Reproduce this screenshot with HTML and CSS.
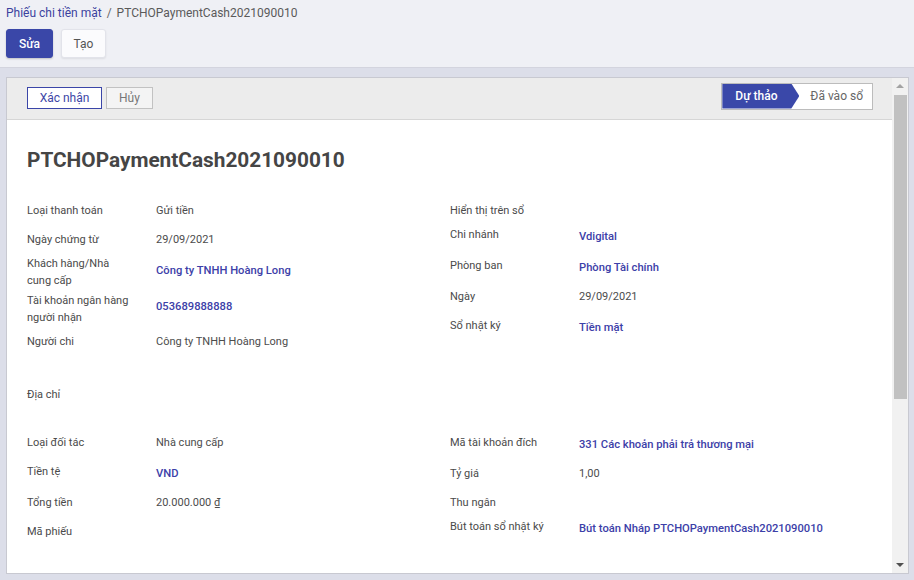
FILE: index.html
```html
<!DOCTYPE html>
<html lang="vi">
<head>
<meta charset="utf-8">
<title>Phiếu chi tiền mặt</title>
<link rel="stylesheet" href="styles.css">
</head>
<body>
<div class="app">
  <div class="cp">
    <div class="crumbs"><a class="crumb-link">Phiếu chi tiền mặt</a><span class="crumb-sep">/</span><span class="crumb-cur">PTCHOPaymentCash2021090010</span></div>
    <div class="cp-buttons">
      <button class="btn btn-primary">Sửa</button>
      <button class="btn btn-secondary">Tạo</button>
    </div>
  </div>
  <div class="content">
    <div class="card">
      <div class="card-main">
        <div class="header">
          <div class="header-buttons">
            <button class="hbtn hbtn-confirm">Xác nhận</button>
            <button class="hbtn hbtn-cancel">Hủy</button>
          </div>
          <div class="status">
            <span class="st st-active">Dự thảo</span>
            <span class="st st-next">Đã vào sổ</span>
          </div>
        </div>
        <div class="sheet">
          <h1 class="title">PTCHOPaymentCash2021090010</h1>
          <div class="groups">
            <div class="group">
              <div class="f h29"><span class="lbl">Loại thanh toán</span><span class="val">Gửi tiền</span></div>
              <div class="f h24"><span class="lbl">Ngày chứng từ</span><span class="val">29/09/2021</span></div>
              <div class="f h37"><span class="lbl">Khách hàng/Nhà cung cấp</span><span class="val lnk off7">Công ty TNHH Hoàng Long</span></div>
              <div class="f h41"><span class="lbl">Tài khoản ngân hàng người nhận</span><span class="val lnk off6">053689888888</span></div>
              <div class="f h29"><span class="lbl">Người chi</span><span class="val">Công ty TNHH Hoàng Long</span></div>
            </div>
            <div class="group">
              <div class="f h24"><span class="lbl">Hiển thị trên sổ</span><span class="val"></span></div>
              <div class="f h31"><span class="lbl">Chi nhánh</span><span class="val lnk">Vdigital</span></div>
              <div class="f h31"><span class="lbl">Phòng ban</span><span class="val lnk">Phòng Tài chính</span></div>
              <div class="f h29"><span class="lbl">Ngày</span><span class="val">29/09/2021</span></div>
              <div class="f h31"><span class="lbl">Sổ nhật ký</span><span class="val lnk">Tiền mặt</span></div>
            </div>
          </div>
          <div class="f address"><span class="lbl">Địa chỉ</span><span class="val"></span></div>
          <div class="groups">
            <div class="group">
              <div class="f h29"><span class="lbl">Loại đối tác</span><span class="val">Nhà cung cấp</span></div>
              <div class="f h31"><span class="lbl">Tiền tệ</span><span class="val lnk">VND</span></div>
              <div class="f h29"><span class="lbl">Tổng tiền</span><span class="val">20.000.000 ₫</span></div>
              <div class="f h29"><span class="lbl">Mã phiếu</span><span class="val"></span></div>
            </div>
            <div class="group">
              <div class="f h31"><span class="lbl">Mã tài khoản đích</span><span class="val lnk">331 Các khoản phải trả thương mại</span></div>
              <div class="f h29"><span class="lbl">Tỷ giá</span><span class="val">1,00</span></div>
              <div class="f h24"><span class="lbl">Thu ngân</span><span class="val"></span></div>
              <div class="f h31"><span class="lbl">Bút toán sổ nhật ký</span><span class="val lnk">Bút toán Nháp PTCHOPaymentCash2021090010</span></div>
            </div>
          </div>
        </div>
      </div>
      <div class="vscroll">
        <div class="sb-btn"><span class="tri tri-up"></span></div>
        <div class="sb-track"><div class="sb-thumb"></div></div>
        <div class="sb-btn"><span class="tri tri-down"></span></div>
      </div>
    </div>
  </div>
</div>
</body>
</html>
```
FILE: styles.css
```css
* { box-sizing: border-box; }
html, body { margin: 0; padding: 0; height: 100%; }
body {
  font-family: Roboto, "Noto Sans", Arial, sans-serif;
  color: #4c4c4c;
  background: #dcdee9;
  overflow: hidden;
}
.app { display: flex; flex-direction: column; height: 100vh; }

.cp {
  background: #eff0f5;
  border-bottom: 1px solid #d3d4de;
  padding: 5px 6px 9px;
  height: 68px;
}
.crumbs { font-size: 12px; line-height: 17px; color: #555; white-space: nowrap; }
.crumb-link { color: #3b429e; }
.crumb-sep { margin: 0 5px; color: #666; }
.crumb-cur { color: #5a5a5a; }
.cp-buttons { display: flex; gap: 8px; margin-top: 7px; }
.btn {
  font-family: inherit;
  font-size: 12px;
  height: 29px;
  border-radius: 3px;
  padding: 0;
  cursor: pointer;
}
.btn-primary {
  background: #3a47a8;
  border: 1px solid #3a47a8;
  color: #fff;
  font-weight: 500;
  width: 47px;
  box-shadow: 0 1px 2px rgba(0,0,0,.2);
}
.btn-secondary {
  background: #fbfbfd;
  border: 1px solid #e2e3ea;
  color: #555;
  width: 45px;
  box-shadow: 0 1px 2px rgba(0,0,0,.08);
}

.content { flex: 1; padding: 9px 5px 6px 6px; min-height: 0; }
.card {
  height: 100%;
  display: flex;
  background: #fff;
  border: 1px solid #c8c9d1;
  overflow: hidden;
}
.card-main { flex: 1; min-width: 0; overflow: hidden; }

.header {
  height: 42px;
  background: #ececec;
  border-bottom: 1px solid #d6d6d6;
  display: flex;
  align-items: center;
  justify-content: space-between;
  padding: 0 19px 0 20px;
}
.header-buttons { display: flex; gap: 4px; margin-top: -1px; }
.hbtn {
  font-family: inherit;
  font-size: 12px;
  height: 22px;
  padding: 0;
  cursor: pointer;
}
.hbtn-confirm {
  width: 75px;
  background: #fff;
  border: 1px solid #3b46a8;
  color: #3d46a6;
}
.hbtn-cancel {
  width: 47px;
  background: #f4f4f4;
  border: 1px solid #c2c2c2;
  color: #777;
}
.status {
  display: flex;
  height: 27px;
  margin-top: -5px;
  border: 1px solid #bcbcbc;
  background: #fff;
}
.st { display: flex; align-items: center; font-size: 12px; }
.st-active {
  background: #3a48a9;
  color: #fff;
  font-weight: 500;
  width: 77px;
  padding-left: 13px;
  clip-path: polygon(0 0, calc(100% - 8px) 0, 100% 50%, calc(100% - 8px) 100%, 0 100%);
}
.st-next { color: #666; padding: 0 9px 0 11px; }

.sheet { padding: 28px 20px 0; }
.title {
  margin: 0;
  font-size: 20.8px;
  line-height: 24px;
  font-weight: 700;
  color: #454545;
}
.groups {
  display: grid;
  grid-template-columns: 423px 1fr;
  margin-top: 30px;
}
.f {
  display: grid;
  grid-template-columns: 129px 1fr;
  align-items: start;
  font-size: 11px;
  line-height: 17px;
}
.lbl { color: #4a4a4a; padding-right: 24px; }
.val { color: #4c4c4c; }
.lnk { color: #3c40a8; font-weight: 500; font-size: 11.2px; padding-top: 2px; }
.off7 { padding-top: 7px; }
.off6 { padding-top: 6px; }
.h24 { height: 24px; }
.h29 { height: 29px; }
.h31 { height: 31px; }
.h37 { height: 37px; }
.h41 { height: 41px; }
.address { margin-top: 24px; height: 24px; }
.address + .groups { margin-top: 24px; }

.vscroll {
  width: 16px;
  flex: none;
  background: #f1f1f1;
  display: flex;
  flex-direction: column;
}
.sb-btn { height: 16px; display: flex; align-items: center; justify-content: center; flex: none; }
.sb-track { flex: 1; padding: 1px 1px 0 2px; }
.sb-thumb { height: 304px; background: #c1c1c1; }
.tri { width: 0; height: 0; border-left: 4px solid transparent; border-right: 4px solid transparent; }
.tri-up { border-bottom: 4px solid #a3a3a3; }
.tri-down { border-top: 4px solid #505050; }
```
